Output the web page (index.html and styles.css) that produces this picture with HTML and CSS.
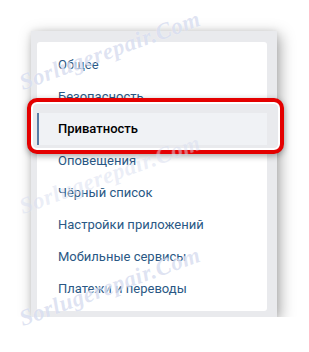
FILE: index.html
```html
<!DOCTYPE html>
<html lang="ru">
<head>
  <meta charset="UTF-8" />
  <meta name="viewport" content="width=device-width, initial-scale=1.0"/>
  <title>Настройки</title>
  <link rel="stylesheet" href="styles.css">
</head>
<body>

  <div class="panel">
    <ul class="menu">
      <li><a class="menu-item" href="#">Общее</a></li>
      <li><a class="menu-item" href="#">Безопасность</a></li>
      <li class="highlight"><a class="menu-item active" href="#">Приватность</a></li>
      <li><a class="menu-item" href="#">Оповещения</a></li>
      <li><a class="menu-item" href="#">Чёрный список</a></li>
      <li><a class="menu-item" href="#">Настройки приложений</a></li>
      <li><a class="menu-item" href="#">Мобильные сервисы</a></li>
      <li><a class="menu-item" href="#">Платежи и переводы</a></li>
    </ul>
  </div>

  <!-- watermark -->
  <span class="wm wm-top">Sorlugerepair.Com</span>
  <span class="wm wm-mid">Sorlugerepair.Com</span>
  <span class="wm wm-bottom">Sorlugerepair.Com</span>

</body>
</html>
```

FILE: styles.css
```css
* {
  box-sizing: border-box;
  margin: 0;
  padding: 0;
}

body {
  font-family: Roboto, "Open Sans", Arial, sans-serif;
  font-size: 13px;
  background: #fff;
  color: #000;
}

.panel {
  width: 246px;
  margin: 31px 0 0 31px;
  padding: 11px 10px 6px 6px;
  background: #e9eaed;
  box-shadow: 3px 4px 14px rgba(0, 0, 0, 0.35), 0 0 6px rgba(0, 0, 0, 0.08);
}

.menu {
  list-style: none;
  background: #fff;
  border-radius: 3px;
  padding: 7px 0 6px;
}

.menu-item {
  display: block;
  height: 32px;
  line-height: 32px;
  padding-left: 21px;
  color: #2a5885;
  text-decoration: none;
}

.menu-item.active {
  padding-left: 19px;
  border-left: 2px solid #5b7ba3;
  background: #f0f2f5;
  color: #000;
  font-weight: 500;
}

/* red frame drawn over the selected row */
.highlight {
  position: relative;
  z-index: 1;
}

.highlight::before {
  content: "";
  position: absolute;
  top: -15px;
  bottom: -9px;
  left: -10px;
  right: -17px;
  z-index: -1;
  background: #e9eaed;
  border: 4px solid #e40000;
  border-radius: 10px;
  box-shadow: inset 0 0 0 2px #fff, 0 2px 6px rgba(0, 0, 0, 0.35);
}

.wm {
  position: absolute;
  left: 24px;
  z-index: 2;
  font-family: "Liberation Serif", serif;
  font-style: italic;
  font-weight: bold;
  font-size: 23px;
  letter-spacing: 0.6px;
  line-height: 1;
  color: rgba(170, 182, 222, 0.38);
  text-shadow: 0 0 1px rgba(255, 255, 255, 0.8);
  transform-origin: 0 100%;
  transform: rotate(-20deg);
  pointer-events: none;
  white-space: nowrap;
}

.wm-top {
  top: 71px;
}

.wm-mid {
  top: 195px;
  opacity: 0.6;
}

.wm-bottom {
  top: 307px;
}
```
